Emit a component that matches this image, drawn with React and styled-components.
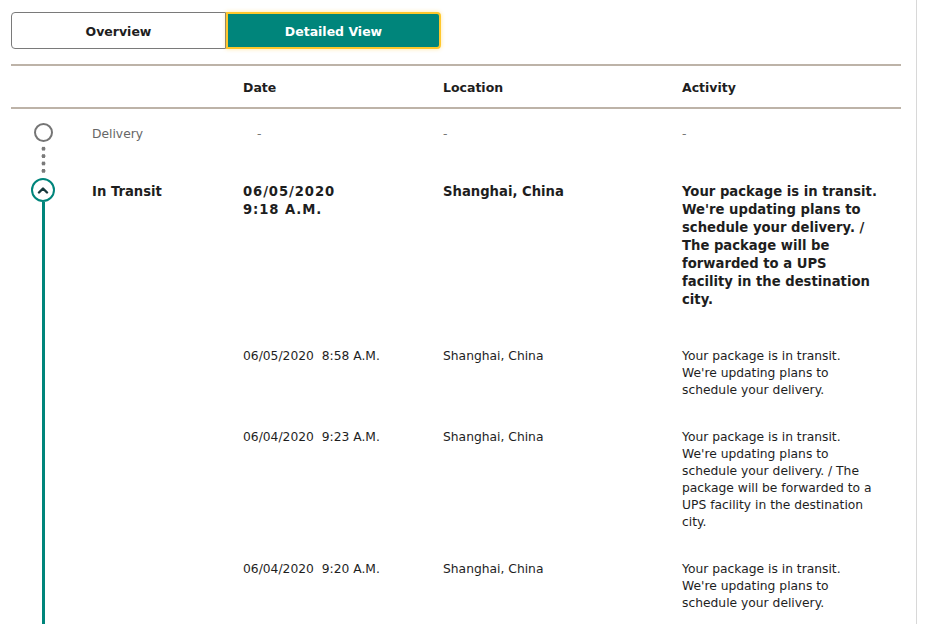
import React from 'react'
import styled, { createGlobalStyle } from 'styled-components'

const GlobalStyle = createGlobalStyle`
  html, body {
    margin: 0;
    padding: 0;
    background: #fff;
  }
  body {
    font-family: "DejaVu Sans", Tahoma, Verdana, sans-serif;
    color: #1e1e1e;
  }
`

const Panel = styled.section`
  width: 917px;
  min-height: 624px;
  box-sizing: border-box;
  border-right: 1px solid #d8d8d8;
  padding: 12px 15px 0 11px;
`

const Tabs = styled.div`
  display: flex;
  margin-bottom: 15px;
`

const Tab = styled.button`
  width: 215px;
  height: 37px;
  box-sizing: border-box;
  padding-top: 2px;
  font-family: inherit;
  font-size: 12.5px;
  font-weight: bold;
  cursor: pointer;
  color: ${p => (p.$active ? '#fff' : '#1e1e1e')};
  background: ${p => (p.$active ? '#00857b' : '#fff')};
  border: ${p => (p.$active ? '2px solid #ffc72c' : '1px solid #7a7a7a')};
  border-radius: ${p => (p.$active ? '0 4px 4px 0' : '4px 0 0 4px')};
  box-shadow: ${p => (p.$active ? '0 0 4px rgba(255, 199, 44, 0.45)' : 'none')};
`

const Grid = styled.div`
  display: grid;
  grid-template-columns: 81px 151px 200px 239px 1fr;
`

const Head = styled(Grid)`
  border-top: 2px solid #bdb3a8;
  border-bottom: 2px solid #bdb3a8;
  height: 41px;
  align-items: center;
  box-sizing: content-box;
`

const HeadCell = styled.div`
  font-size: 12.5px;
  font-weight: bold;
  padding-top: 2px;
`

const Row = styled(Grid)``

const Cell = styled.div`
  padding: ${p => p.$pad};
  font-size: ${p => (p.$bold ? '13.2px' : '12.3px')};
  line-height: ${p => (p.$bold ? '18px' : '17px')};
  font-weight: ${p => (p.$bold ? 'bold' : 'normal')};
  color: ${p => (p.$muted ? '#666' : '#1e1e1e')};
  letter-spacing: ${p => (p.$wide ? '0.9px' : 'normal')};
`

const Activity = styled(Cell)`
  max-width: ${p => (p.$bold ? '198px' : '192px')};
`

const Dash = styled.span`
  color: #777;
  padding-left: ${p => p.$indent || 0}px;
`

const Marker = styled.div`
  display: flex;
  flex-direction: column;
  align-items: center;
  width: 64px;
  padding-top: ${p => p.$top || 0}px;
`

const Ring = styled.div`
  width: 19px;
  height: 19px;
  box-sizing: border-box;
  border: 2px solid #757575;
  border-radius: 50%;
  flex: none;
`

const CurrentRing = styled.div`
  width: 24px;
  height: 24px;
  box-sizing: border-box;
  border: 2.5px solid #00857b;
  border-radius: 50%;
  display: flex;
  align-items: center;
  justify-content: center;
  flex: none;
`

const Dots = styled.div`
  flex: 1;
  width: 5px;
  margin: 3px 0 2px;
  background-image: radial-gradient(circle, #7a7a7a 1.8px, transparent 2.2px);
  background-size: 5px 7.4px;
  background-repeat: repeat-y;
`

const Line = styled.div`
  flex: 1;
  width: 3px;
  background: #00857b;
`

const events = [
  {
    date: '06/05/2020',
    time: '8:58 A.M.',
    location: 'Shanghai, China',
    activity: "Your package is in transit. We're updating plans to schedule your delivery."
  },
  {
    date: '06/04/2020',
    time: '9:23 A.M.',
    location: 'Shanghai, China',
    activity:
      "Your package is in transit. We're updating plans to schedule your delivery. / The package will be forwarded to a UPS facility in the destination city."
  },
  {
    date: '06/04/2020',
    time: '9:20 A.M.',
    location: 'Shanghai, China',
    activity: "Your package is in transit. We're updating plans to schedule your delivery."
  }
]

export default function App() {
  return (
    <>
      <GlobalStyle />
      <Panel>
        <Tabs>
          <Tab>Overview</Tab>
          <Tab $active>Detailed View</Tab>
        </Tabs>

        <Head>
          <div />
          <div />
          <HeadCell>Date</HeadCell>
          <HeadCell>Location</HeadCell>
          <HeadCell>Activity</HeadCell>
        </Head>

        <Row>
          <Marker $top={14}>
            <Ring />
            <Dots />
          </Marker>
          <Cell $muted $pad="17px 0 35px">Delivery</Cell>
          <Cell $pad="17px 0 35px"><Dash $indent={14}>-</Dash></Cell>
          <Cell $pad="17px 0 35px"><Dash>-</Dash></Cell>
          <Cell $pad="17px 0 35px"><Dash>-</Dash></Cell>
        </Row>

        <Row>
          <Marker>
            <CurrentRing>
              <svg width="12" height="8" viewBox="0 0 12 8">
                <path d="M2 6.5 L6 2.5 L10 6.5" fill="none" stroke="#17383c" strokeWidth="2.4" strokeLinecap="round" strokeLinejoin="round" />
              </svg>
            </CurrentRing>
            <Line />
          </Marker>
          <Cell $bold $pad="5px 0 23px">In Transit</Cell>
          <Cell $bold $wide $pad="5px 0 23px">06/05/2020<br />9:18 A.M.</Cell>
          <Cell $bold $pad="5px 0 23px">Shanghai, China</Cell>
          <Activity $bold $pad="5px 0 23px">
            Your package is in transit. We're updating plans to schedule your delivery. / The package will be forwarded to a UPS facility in the destination city.
          </Activity>
        </Row>

        {events.map((e, i) => (
          <Row key={i}>
            <Marker>
              <Line />
            </Marker>
            <div />
            <Cell $pad="16px 0 14px">{e.date}&nbsp;&nbsp;{e.time}</Cell>
            <Cell $pad="16px 0 14px">{e.location}</Cell>
            <Activity $pad="16px 0 14px">{e.activity}</Activity>
          </Row>
        ))}
      </Panel>
    </>
  )
}
